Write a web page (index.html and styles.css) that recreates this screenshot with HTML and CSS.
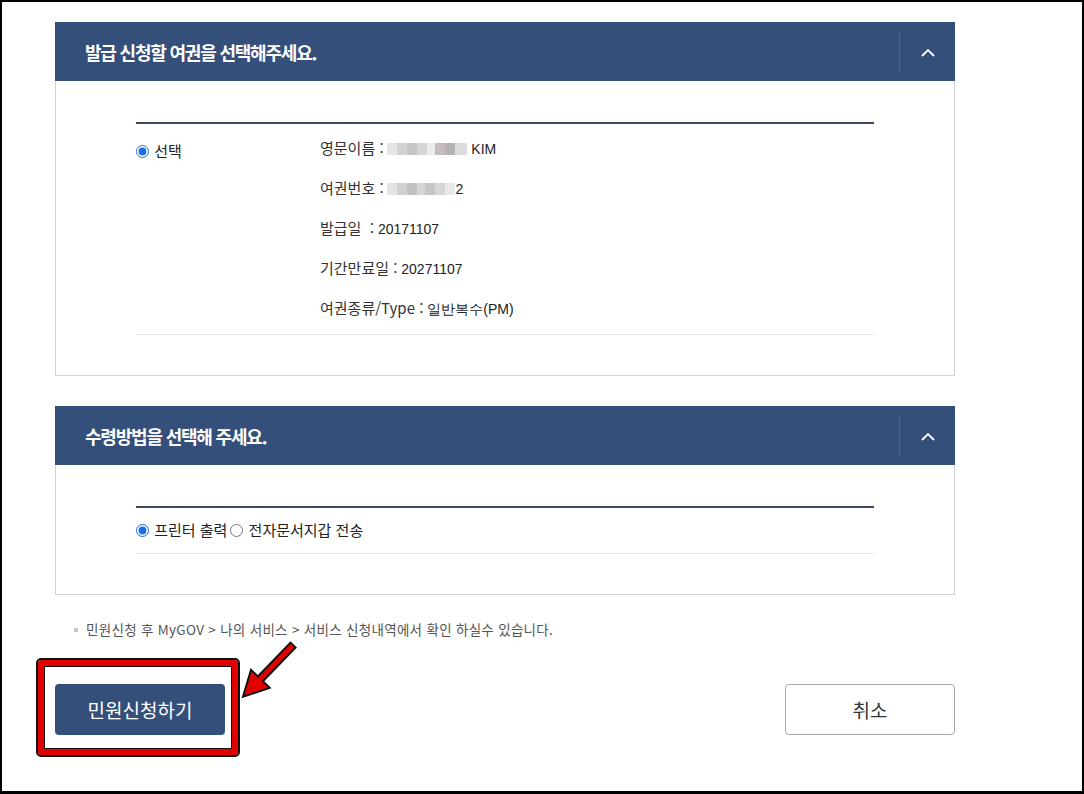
FILE: index.html
```html
<!DOCTYPE html>
<html lang="ko">
<head>
  <meta charset="UTF-8">
  <title>여권 발급 신청</title>
  <link rel="stylesheet" href="styles.css">
</head>
<body>

  <div class="wrap">

    <div class="panel">
      <div class="panel-head">
        <h2>발급 신청할 여권을 선택해주세요.</h2>
        <button class="toggle" type="button">
          <svg width="14" height="8" viewBox="0 0 14 8"><polyline points="1,7 7,1 13,7" fill="none" stroke="#fff" stroke-width="1.8"/></svg>
        </button>
      </div>
      <div class="panel-body">
        <div class="pick">
          <label class="pick-check">
            <input type="radio" name="passport" checked> 선택
          </label>
          <ul class="info">
            <li><span class="lbl">영문이름 :</span> <span class="blur blur-name"></span> KIM</li>
            <li><span class="lbl">여권번호 :</span> <span class="blur blur-no"></span>2</li>
            <li><span class="lbl">발급일 &nbsp;:</span> 20171107</li>
            <li><span class="lbl">기간만료일 :</span> 20271107</li>
            <li><span class="lbl">여권종류/Type :</span> 일반복수(PM)</li>
          </ul>
        </div>
      </div>
    </div>

    <div class="panel">
      <div class="panel-head">
        <h2>수령방법을 선택해 주세요.</h2>
        <button class="toggle" type="button">
          <svg width="14" height="8" viewBox="0 0 14 8"><polyline points="1,7 7,1 13,7" fill="none" stroke="#fff" stroke-width="1.8"/></svg>
        </button>
      </div>
      <div class="panel-body">
        <div class="receive">
          <label><input type="radio" name="receive" checked> 프린터 출력</label><label><input type="radio" name="receive"> 전자문서지갑 전송</label>
        </div>
      </div>
    </div>

    <p class="note">민원신청 후 MyGOV &gt; 나의 서비스 &gt; 서비스 신청내역에서 확인 하실수 있습니다.</p>

    <div class="actions">
      <button class="btn btn-apply" type="button">민원신청하기</button>
      <button class="btn btn-cancel" type="button">취소</button>
    </div>

  </div>

  <!-- annotation overlay -->
  <div class="mark"></div>
  <svg class="arrow" width="64" height="66" viewBox="0 0 64 66">
    <polygon transform="translate(55,7) rotate(134)" points="0,-3.5 47,-3.5 47,-13 72,0 47,13 47,3.5 0,3.5" fill="#e10000" stroke="#111" stroke-width="2" stroke-linejoin="miter"/>
  </svg>

</body>
</html>
```

FILE: styles.css
```css
body {
  margin: 0;
  width: 1084px;
  height: 794px;
  box-sizing: border-box;
  border: 2px solid #000;
  border-bottom-width: 3px;
  background: #fff;
  font-family: "Noto Sans CJK KR", "Noto Sans", sans-serif;
  color: #333;
  overflow: hidden;
}

.wrap {
  width: 900px;
  padding: 20px 0 0 53px;
}

.panel + .panel {
  margin-top: 30px;
}

.panel-head {
  height: 59px;
  background: #354f7b;
  display: flex;
  align-items: center;
  padding-left: 30px;
}

.panel-head h2 {
  margin: 0;
  color: #fff;
  font-size: 18px;
  font-weight: 700;
  letter-spacing: -1.2px;
}

.toggle {
  margin-left: auto;
  width: 56px;
  height: 40px;
  padding: 2px 0 0;
  border: none;
  border-left: 1px solid rgba(255, 255, 255, 0.13);
  background: none;
  display: flex;
  align-items: center;
  justify-content: center;
  cursor: pointer;
}

.panel-body {
  border: 1px solid #d4d4d4;
  border-top: none;
  padding: 41px 80px 40px;
}

input[type="radio"] {
  width: 13px;
  height: 13px;
  margin: 0 1px 0 0;
  vertical-align: -1px;
  accent-color: #1a6fe3;
}

/* passport pick */
.pick {
  display: flex;
  border-top: 2px solid #3d4a62;
  border-bottom: 1px solid #e8e8e8;
  font-size: 15px;
}

.pick-check {
  width: 184px;
  padding-top: 7px;
  line-height: 40px;
  color: #222;
}

.info {
  list-style: none;
  margin: 0;
  padding: 4px 0 6px;
}

.info li {
  height: 40px;
  line-height: 40px;
  font-family: "Liberation Sans", Arial, sans-serif;
  font-size: 14px;
  color: #222;
}

.lbl {
  font-family: "Noto Sans CJK KR", sans-serif;
  font-size: 15px;
  color: #333;
}

.blur {
  display: inline-block;
  height: 12px;
  vertical-align: -1px;
}

.blur-name {
  width: 80px;
  background: linear-gradient(90deg, #e6e6e6 0 10px, #d2d2d2 10px 20px, #c6c6c6 20px 30px, #d6d6d6 30px 40px, #ececec 40px 48px, #c6bcbc 48px 58px, #b4b4b4 58px 68px, #dcdcdc 68px 80px);
}

.blur-no {
  width: 68px;
  background: linear-gradient(90deg, #e4e4e4 0 10px, #d0d0d0 10px 20px, #c2c2c2 20px 30px, #d4d4d4 30px 38px, #c6c6c6 38px 48px, #d6d6d6 48px 58px, #e8e8e8 58px 68px);
}

/* receive method */
.receive {
  border-top: 2px solid #3d4a62;
  border-bottom: 1px solid #e8e8e8;
  height: 45px;
  line-height: 44px;
  font-size: 15px;
  color: #222;
}

.receive label + label {
  margin-left: 3px;
}

.note {
  margin: 24px 0 0;
  padding-left: 19px;
  line-height: 20px;
  font-size: 13.5px;
  color: #555;
  letter-spacing: 0.3px;
}

.note::before {
  content: "";
  display: inline-block;
  width: 4px;
  height: 4px;
  background: #c8c8c8;
  margin-right: 8px;
  vertical-align: 3px;
}

.actions {
  margin-top: 45px;
  display: flex;
  justify-content: space-between;
}

.btn {
  width: 170px;
  height: 51px;
  border-radius: 4px;
  font-family: "Noto Sans CJK KR", sans-serif;
  font-size: 19px;
  cursor: pointer;
}

.btn-apply {
  background: #354f7b;
  border: none;
  color: #fff;
}

.btn-cancel {
  background: #fff;
  border: 1px solid #a8a8a8;
  color: #333;
}

.mark {
  position: absolute;
  left: 38px;
  top: 660px;
  width: 200px;
  height: 95px;
  box-sizing: border-box;
  border: 6px solid #e10000;
  border-radius: 3px;
  outline: 2px solid #111;
  box-shadow: inset 0 0 0 1px #111;
}

.arrow {
  position: absolute;
  left: 238px;
  top: 638px;
  overflow: visible;
}
```
